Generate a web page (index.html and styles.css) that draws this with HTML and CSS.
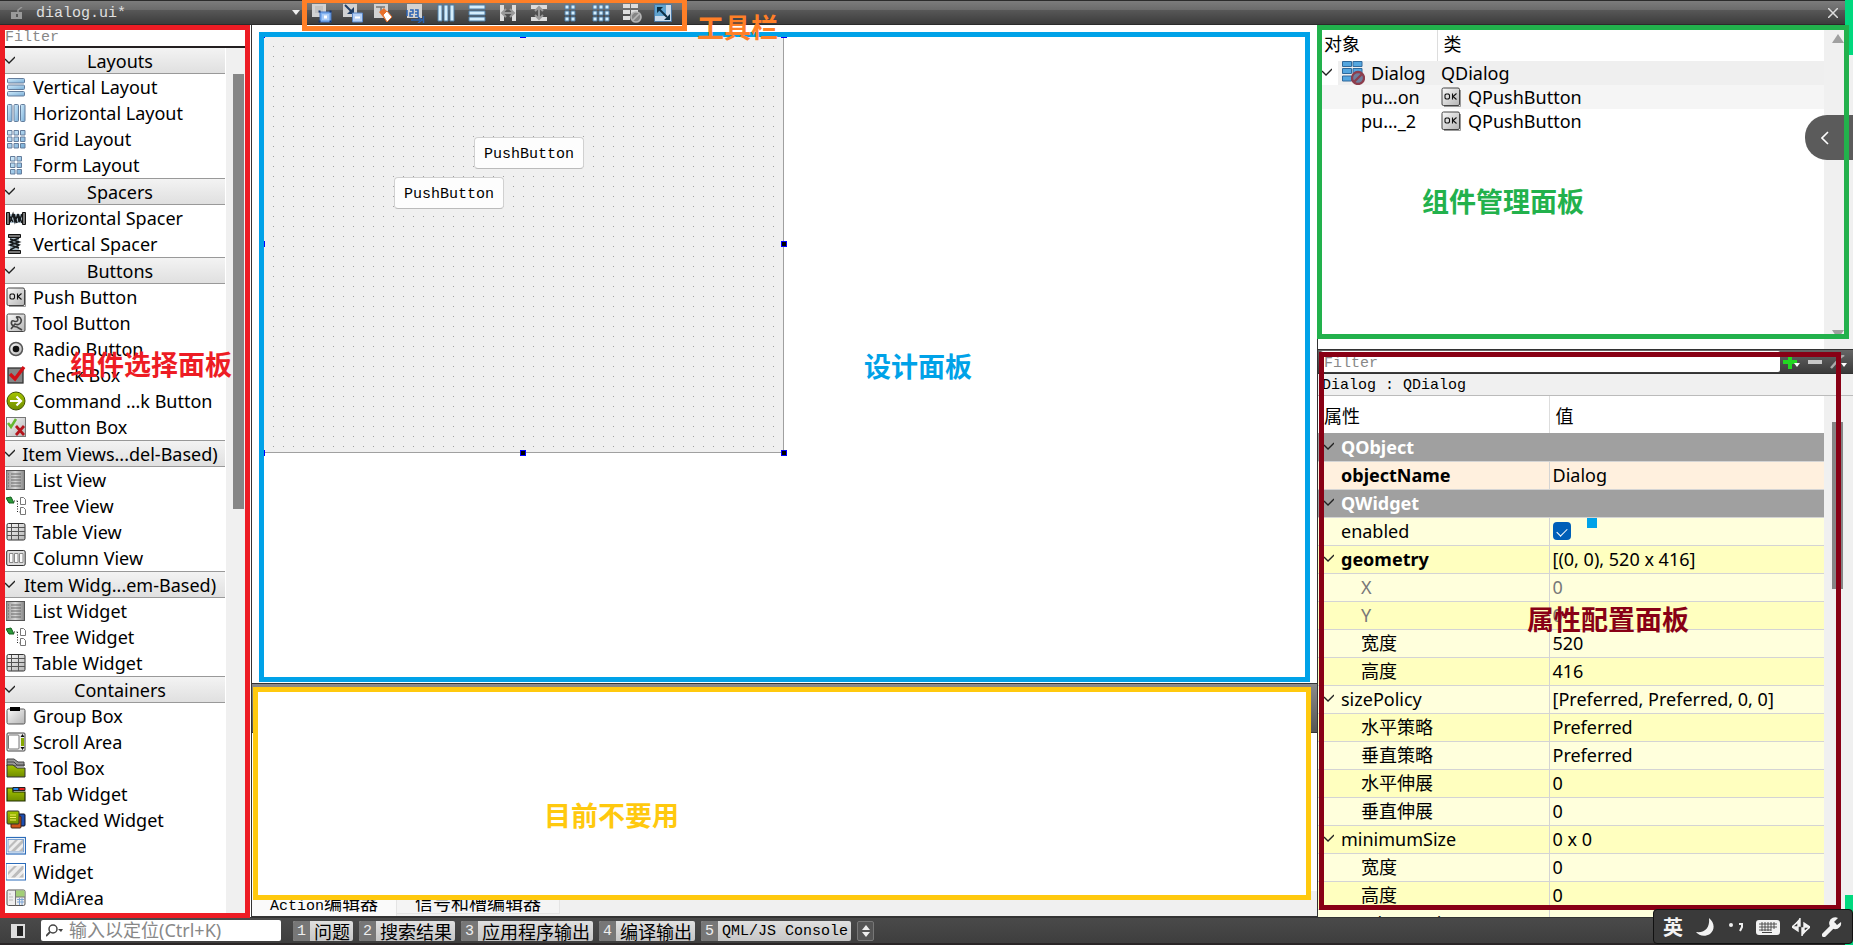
FILE: index.html
```html
<!DOCTYPE html>
<html lang="zh-CN">
<head>
<meta charset="utf-8">
<title>dialog.ui</title>
<link rel="stylesheet" href="styles.css">
</head>
<body>
<svg class="defs" aria-hidden="true">
  <defs>
    <linearGradient id="blue" x1="0" y1="0" x2="1" y2="1"><stop offset="0" stop-color="#d3ecfb"/><stop offset="1" stop-color="#78aed8"/></linearGradient>
    <linearGradient id="grey" x1="0" y1="0" x2="1" y2="1"><stop offset="0" stop-color="#fafafa"/><stop offset="1" stop-color="#b4b4b4"/></linearGradient>
    <linearGradient id="green" x1="0" y1="0" x2="0" y2="1"><stop offset="0" stop-color="#a5c500"/><stop offset="1" stop-color="#6f8c00"/></linearGradient>
    <linearGradient id="steel" x1="0" y1="0" x2="1" y2="0"><stop offset="0" stop-color="#909090"/><stop offset=".5" stop-color="#d8d8d8"/><stop offset="1" stop-color="#858585"/></linearGradient>
    <symbol id="chev" viewBox="0 0 10 10"><path d="M0 3l4 4 6-6" fill="none" stroke="#222" stroke-width="1.3"/></symbol>
    <symbol id="vlay" viewBox="0 0 20 20"><g fill="url(#blue)" stroke="#647d9c"><rect x="1.500" y="1.500" width="17" height="4.500" rx="1"/><rect x="1.500" y="8" width="17" height="4.500" rx="1"/><rect x="1.500" y="14.500" width="17" height="4.500" rx="1"/></g></symbol>
    <symbol id="hlay" viewBox="0 0 20 20"><g fill="url(#blue)" stroke="#647d9c"><rect x="1.500" y="1.500" width="4.500" height="17" rx="1"/><rect x="8" y="1.500" width="4.500" height="17" rx="1"/><rect x="14.500" y="1.500" width="4.500" height="17" rx="1"/></g></symbol>
    <symbol id="glay" viewBox="0 0 20 20"><g fill="url(#blue)" stroke="#647d9c"><path d="M1.500 1.500H6V6H1.500zM8 1.500h4.500V6H8zM14.500 1.500H19V6h-4.500zM1.500 8H6v4.500H1.500zM8 8h4.500v4.500H8zM14.500 8H19v4.500h-4.500zM1.500 14.500H6V19H1.500zM8 14.500h4.500V19H8zM14.500 14.500H19V19h-4.500z"/></g></symbol>
    <symbol id="flay" viewBox="0 0 20 20"><g fill="url(#blue)" stroke="#647d9c"><path d="M4.500 1.500H9V6H4.500zM11 1.500h4.500V6H11zM4.500 8H9v4.500H4.500zM11 8h4.500v4.500H11zM4.500 14.500H9V19H4.500zM11 14.500h4.500V19H11z"/></g></symbol>
    <symbol id="hsp" viewBox="0 0 20 20"><path d="M3 6h14v9H3z" fill="#a9bcc8"/><path d="M4 14l3-8 2 8 3-8 1 8 3-8M3 7l4 7M8 6l3 9M12 6l4 9" fill="none" stroke="#15191c" stroke-width="1.500"/><path d="M.5 4.500h3v12h-3zM16.500 4.500h3v12h-3z" fill="#777" stroke="#111"/></symbol>
    <symbol id="vsp" viewBox="0 0 20 20"><path d="M4 3h9v14H4z" fill="#a9bcc8"/><path d="M4 5l9 3-9 3 9 3M13 4l-9 4 9 3-9 5" fill="none" stroke="#15191c" stroke-width="1.600"/><path d="M2.500.5h12v3h-12zM2.500 16.500h12v3h-12z" fill="#777" stroke="#111"/></symbol>
    <symbol id="ok" viewBox="0 0 20 20"><path d="M3 19.500h16.500V3" fill="none" stroke="#999"/><rect x="1" y="1" width="17.500" height="17.500" rx="1.500" fill="url(#grey)" stroke="#444"/><path d="M5 7h2.500l1 1v3l-1 1H5l-1-1V8zM11.500 6.500v6M15.500 6.500l-3.500 3 3.500 3" fill="none" stroke="#111" stroke-width="1.100"/></symbol>
    <symbol id="tool" viewBox="0 0 20 20"><rect x="1" y="1" width="18" height="17.500" rx="1.500" fill="url(#grey)" stroke="#444"/><path d="M10 4c4-1 6 2 5 5-1 3-4 3-6 2l-4 5M10 4c3 2 2 4 0 4.500C8 9 8 7 6 8c-2 3 1 6 5 6l5 3" fill="none" stroke="#444" stroke-width="1.600"/></symbol>
    <symbol id="radio" viewBox="0 0 20 20"><circle cx="10" cy="10" r="6.500" fill="url(#grey)" stroke="#555" stroke-width="1.500"/><circle cx="10" cy="10" r="3.300" fill="#111"/></symbol>
    <symbol id="check" viewBox="0 0 20 20"><rect x="2" y="3" width="15" height="15" fill="#858585" stroke="#333" stroke-width="1.300"/><path d="M4 9l5 5 9-12" fill="none" stroke="#d21017" stroke-width="3.400"/></symbol>
    <symbol id="cmd" viewBox="0 0 20 20"><circle cx="10" cy="10" r="9" fill="url(#green)" stroke="#435400"/><path d="M4 10h11M10.500 5.500L15 10l-4.500 4.500" fill="none" stroke="#fff" stroke-width="2.200"/></symbol>
    <symbol id="bbox" viewBox="0 0 20 20"><rect x=".5" y=".5" width="19" height="19" fill="url(#grey)" stroke="#777"/><path d="M2 6l3 4 5-8" fill="none" stroke="#65b82e" stroke-width="2.500"/><path d="M10 9l8 9M18 9l-8 9" stroke="#b5141c" stroke-width="2.700"/></symbol>
    <symbol id="list" viewBox="0 0 20 20"><rect x="0" y=".5" width="18.500" height="19" fill="url(#steel)" stroke="#555"/><path d="M5 4h10M5 7h10M5 10h10M5 13h10M5 16h10M2 4h1M2 7h1M2 10h1M2 13h1M2 16h1" stroke="#666"/></symbol>
    <symbol id="tree" viewBox="0 0 20 20"><path d="M0 2l5-1 3 6-5 0z" fill="#2c9a3a" stroke="#125c1d"/><path d="M8 5h4M11.500 5v11h2" fill="none" stroke="#222" stroke-dasharray="1 1.500"/><path d="M14.500 1.500h3l2 2v5h-5zM14.500 11.500h3l2 2v5h-5z" fill="#fff" stroke="#777"/></symbol>
    <symbol id="table" viewBox="0 0 20 20"><rect x="1" y="1.500" width="18" height="16.500" rx="1.500" fill="url(#grey)" stroke="#333"/><path d="M1 5.500h18M1 9.500h18M1 13.500h18M5.500 2v16M12.500 2v16" stroke="#555"/></symbol>
    <symbol id="column" viewBox="0 0 20 20"><rect x=".7" y="2.500" width="18.500" height="15" rx="1.500" fill="#ddd" stroke="#333"/><path d="M3.500 5.500h3.500v9H3.500zM8.500 5.500H12v9H8.500zM13.500 5.500H17v9h-3.500z" fill="#fafafa" stroke="#888"/></symbol>
    <symbol id="group" viewBox="0 0 20 20"><rect x="1" y="3" width="18" height="15" rx="1.500" fill="url(#grey)" stroke="#555"/><path d="M4 1h10v4H4z" fill="#000"/></symbol>
    <symbol id="scroll" viewBox="0 0 20 20"><rect x="1" y="1" width="18" height="18" rx="1" fill="#eee" stroke="#444"/><rect x="2.500" y="3" width="10.500" height="14" rx="1" fill="#fff" stroke="#777"/><path d="M15 6h3v8h-3z" fill="#86a800"/><path d="M14.500 5l2-3 2 3zM14.500 15l2 3 2-3z" fill="#111"/></symbol>
    <symbol id="tbox" viewBox="0 0 20 20"><path d="M1 1h7l4 3h6v4H1z" fill="#999" stroke="#444"/><path d="M1 4l7 0 3 3h8" fill="none" stroke="#444"/><path d="M1 7h6l4 3h8v9H1z" fill="url(#green)" stroke="#333"/></symbol>
    <symbol id="tab" viewBox="0 0 20 20"><path d="M1 4h6v4h12v9H1z" fill="url(#green)" stroke="#223000" stroke-width="1.200"/><path d="M7 3.500h6v3H7z" fill="#2587e8" stroke="#222"/><path d="M13 3.500h6v3h-6z" fill="#ea2020" stroke="#222"/></symbol>
    <symbol id="stack" viewBox="0 0 20 20"><rect x="9" y="4" width="10" height="12" rx="1" fill="#1d4eb0" stroke="#112"/><rect x="5" y="6" width="10" height="12" rx="1" fill="#d0561a" stroke="#421"/><rect x="1" y="1" width="12" height="13" rx="1" fill="url(#green)" stroke="#333"/><path d="M4 5h6M4 7.500h6M4 10h6" stroke="#f4f060" stroke-width="1.200"/></symbol>
    <symbol id="frame" viewBox="0 0 20 20"><rect x="0" y="1.500" width="19.500" height="16.500" fill="#fff" stroke="#2c6cb9" stroke-width="1.200"/><rect x="2" y="3.500" width="15.500" height="12.500" fill="#ededed" stroke="#4e83c4" stroke-width=".7"/><path d="M3 10l6-6h3L3 13zM5 15L16 4h1v3l-8 8zM13 15l4-4v4z" fill="#bcbcbc"/></symbol>
    <symbol id="widget" viewBox="0 0 20 20"><rect x="0" y="1.500" width="19.500" height="16.500" fill="#fff" stroke="#2c6cb9"/><path d="M2 3.500h15.500V16H2z" fill="#ededed"/><path d="M2 10l6-6h3l-9 9zM5 15.500L16 4h1.500v3L9 15.500zM13 15.500l4.500-4.500v4.500z" fill="#bcbcbc"/></symbol>
    <symbol id="mdi" viewBox="0 0 20 20"><rect x="1" y="2" width="18" height="15.500" rx="1.500" fill="#eee" stroke="#555"/><path d="M9 2.500h9.500V9H9z" fill="#a2cf76"/><path d="M9.500 2v15.500M9.500 9H19" stroke="#777"/><path d="M3 6h2M3 9h4M3 12h4" stroke="#bbb"/><path d="M11 11.500h7M11 14h7M13.500 10v7M16 10v7" stroke="#7da4d4"/></symbol>
    <symbol id="form" viewBox="0 0 24 24"><g fill="#54a6df" stroke="#30699b"><path d="M1.500.5h9v5h-9zM12 .5h9v5h-9zM1.500 7.500h9v5h-9zM12 7.500h9v5h-9zM1.500 15h9v5h-9z"/></g><circle cx="17" cy="17" r="6" fill="#6f7f9d" stroke="#8d3d4c" stroke-width="2.300"/><path d="M13 21l8-8" stroke="#8d3d4c" stroke-width="2.300"/></symbol>
  </defs>
</svg>

<div class="app">
  <header class="topbar">
    <div class="doc">
      <svg class="lock" width="12" height="13" viewBox="0 0 12 13"><path d="M0 5h11v7H0z" fill="#999"/><path d="M7 5V3l4-3" fill="none" stroke="#999" stroke-width="1.500"/><path d="M5 7h2v3H5z" fill="#555"/></svg>
      <select class="doc-select" aria-label="文件"><option>dialog.ui*</option></select>
      <svg class="drop" width="8" height="6" viewBox="0 0 8 6"><path d="M0 0h8L4 5z" fill="#eee"/></svg>
    </div>
    <nav class="tools">
      <button class="tool" aria-label="编辑控件"><svg viewBox="0 0 20 20"><path d="M0 1h14v13H0z" fill="#d2d2d2"/><path d="M3 3h8v7H3z" fill="#c2c2c2"/><path d="M8 9h11v10H8z" fill="#7fb0f0" stroke="#4577c4"/><path d="M10 11h7v6h-7z" fill="#a9cbf7"/><path d="M12 12.500h3v3h-3z" fill="#fff"/><path d="M6.500 7.500h2v2h-2zM17.500 7.500h2v2h-2zM6.500 17.500h2v2h-2zM17.500 17.500h2v2h-2z" fill="#16366f"/></svg></button>
      <button class="tool" aria-label="编辑信号/槽"><svg viewBox="0 0 20 20"><path d="M0 1h14v13H0z" fill="#d2d2d2"/><path d="M2 2l7 7" stroke="#213d63" stroke-width="2"/><path d="M11 4v7H4z" fill="#213d63"/><path d="M9.500 10h10v9h-10z" fill="#b5d0f6" stroke="#5b87c7"/><path d="M12 14.500h5" stroke="#fff" stroke-width="2"/></svg></button>
      <button class="tool" aria-label="编辑伙伴"><svg viewBox="0 0 20 20"><path d="M0 1h14v14H0z" fill="#d2d2d2"/><path d="M2 4h9M7 4v6" stroke="#777" stroke-width="1.500"/><path d="M5 9l5-4 8 9-5 5z" fill="#e8702a"/><path d="M9 12l4-4 5 6-5 5z" fill="#fff" stroke="#e8702a"/></svg></button>
      <button class="tool" aria-label="编辑Tab顺序"><svg viewBox="0 0 20 20"><path d="M2 1h15v14H2z" fill="#d2d2d2"/><path d="M2 7v6M5 7h3v3H5v3h3M10 7h3v6h-3M10 10h3M6 17h9M13 14l4 3-4 3M18.500 13v7" fill="none" stroke="#2a62b2" stroke-width="1.500"/></svg></button>
      <button class="tool" aria-label="水平布局"><svg viewBox="0 0 20 20"><path d="M2 2h4v16H2zM8 2h4v16H8zM14 2h4v16h-4z" fill="#d5eefc" stroke="#4d7da6"/></svg></button>
      <button class="tool" aria-label="垂直布局"><svg viewBox="0 0 20 20"><path d="M2 2h16v4H2zM2 8h16v4H2zM2 14h16v4H2z" fill="#d5eefc" stroke="#4d7da6"/></svg></button>
      <button class="tool" aria-label="水平分裂器"><svg viewBox="0 0 20 20"><path d="M2 2h4v16H2zM14 2h4v16h-4z" fill="#ddd"/><path d="M4 10h12M8 6l-4 4 4 4M12 6l4 4-4 4" fill="none" stroke="#999" stroke-width="2"/></svg></button>
      <button class="tool" aria-label="垂直分裂器"><svg viewBox="0 0 20 20"><path d="M2 2h16v4H2zM2 14h16v4H2z" fill="#ddd"/><path d="M10 4v12M6 8l4-4 4 4M6 12l4 4 4-4" fill="none" stroke="#999" stroke-width="2"/></svg></button>
      <button class="tool" aria-label="表单布局"><svg viewBox="0 0 20 20"><path d="M5 2h4v4H5zM11 2h4v4h-4zM5 8h4v4H5zM11 8h4v4h-4zM5 14h4v4H5zM11 14h4v4h-4z" fill="#d5eefc" stroke="#4d7da6"/></svg></button>
      <button class="tool" aria-label="栅格布局"><svg viewBox="0 0 20 20"><path d="M2 2h4v4H2zM8 2h4v4H8zM14 2h4v4h-4zM2 8h4v4H2zM8 8h4v4H8zM14 8h4v4h-4zM2 14h4v4H2zM8 14h4v4H8zM14 14h4v4h-4z" fill="#d5eefc" stroke="#4d7da6"/></svg></button>
      <button class="tool" aria-label="打破布局"><svg viewBox="0 0 20 20"><path d="M1 1h7v4H1zM9 1h7v4H9zM1 7h7v4H1zM9 7h7v4H9zM1 13h7v4H1z" fill="#ddd"/><circle cx="14" cy="14" r="5" fill="#858585" stroke="#b5b5b5" stroke-width="1.700"/><path d="M11 17l6-6" stroke="#b5b5b5" stroke-width="1.700"/></svg></button>
      <button class="tool" aria-label="调整大小"><svg viewBox="0 0 20 20"><path d="M1.500 1.500h17v17h-17z" fill="#c9dbec" stroke="#4b77a3"/><path d="M2 2h11v11H2z" fill="#5fa3cf"/><path d="M6 6l8 8" stroke="#0b2f45" stroke-width="2"/><path d="M4 4h6l-6 6zM17 17h-6l6-6z" fill="#0b2f45"/></svg></button>
    </nav>
    <button class="close" aria-label="关闭"><svg width="10" height="10" viewBox="0 0 10 10"><path d="M0 0l10 10M10 0L0 10" stroke="#ddd" stroke-width="1.500"/></svg></button>
    <div class="mark mark-tools"></div>
  </header>

  <main class="main">
    <aside class="widgets">
      <input class="filter" type="text" placeholder="Filter" aria-label="Filter">
      <div class="box">
        <div class="groups">
          <button class="head"><svg><use href="#chev"/></svg><span>Layouts</span></button>
          <ul>
            <li><svg><use href="#vlay"/></svg>Vertical Layout</li>
            <li><svg><use href="#hlay"/></svg>Horizontal Layout</li>
            <li><svg><use href="#glay"/></svg>Grid Layout</li>
            <li><svg><use href="#flay"/></svg>Form Layout</li>
          </ul>
          <button class="head"><svg><use href="#chev"/></svg><span>Spacers</span></button>
          <ul>
            <li><svg><use href="#hsp"/></svg>Horizontal Spacer</li>
            <li><svg><use href="#vsp"/></svg>Vertical Spacer</li>
          </ul>
          <button class="head"><svg><use href="#chev"/></svg><span>Buttons</span></button>
          <ul>
            <li><svg><use href="#ok"/></svg>Push Button</li>
            <li><svg><use href="#tool"/></svg>Tool Button</li>
            <li><svg><use href="#radio"/></svg>Radio Button</li>
            <li><svg><use href="#check"/></svg>Check Box</li>
            <li><svg><use href="#cmd"/></svg>Command ...k Button</li>
            <li><svg><use href="#bbox"/></svg>Button Box</li>
          </ul>
          <button class="head"><svg><use href="#chev"/></svg><span>Item Views...del-Based)</span></button>
          <ul>
            <li><svg><use href="#list"/></svg>List View</li>
            <li><svg><use href="#tree"/></svg>Tree View</li>
            <li><svg><use href="#table"/></svg>Table View</li>
            <li><svg><use href="#column"/></svg>Column View</li>
          </ul>
          <button class="head"><svg><use href="#chev"/></svg><span>Item Widg...em-Based)</span></button>
          <ul>
            <li><svg><use href="#list"/></svg>List Widget</li>
            <li><svg><use href="#tree"/></svg>Tree Widget</li>
            <li><svg><use href="#table"/></svg>Table Widget</li>
          </ul>
          <button class="head"><svg><use href="#chev"/></svg><span>Containers</span></button>
          <ul>
            <li><svg><use href="#group"/></svg>Group Box</li>
            <li><svg><use href="#scroll"/></svg>Scroll Area</li>
            <li><svg><use href="#tbox"/></svg>Tool Box</li>
            <li><svg><use href="#tab"/></svg>Tab Widget</li>
            <li><svg><use href="#stack"/></svg>Stacked Widget</li>
            <li><svg><use href="#frame"/></svg>Frame</li>
            <li><svg><use href="#widget"/></svg>Widget</li>
            <li><svg><use href="#mdi"/></svg>MdiArea</li>
          </ul>
        </div>
        <div class="track"><div class="thumb thumb-widgets"></div></div>
      </div>
      <div class="mark mark-widgets"></div>
      <div class="note note-widgets">组件选择面板</div>
    </aside>

    <section class="center">
      <div class="canvas">
        <div class="dialog">
          <button class="push push-1">PushButton</button>
          <button class="push push-2">PushButton</button>
          <i class="grip n"></i><i class="grip ne"></i><i class="grip e"></i><i class="grip se"></i><i class="grip s"></i><i class="grip sw"></i><i class="grip w"></i><i class="grip nw"></i>
        </div>
        <div class="mark mark-canvas"></div>
        <div class="note note-tools">工具栏</div>
        <div class="note note-canvas">设计面板</div>
      </div>
      <div class="actions">
        <div class="actions-bar"></div>
        <div class="actions-body"></div>
        <div class="tabs"><button class="tabbtn active"><span class="latin">Action</span>编辑器</button><button class="tabbtn">信号和槽编辑器</button></div>
        <div class="mark mark-actions"></div>
        <div class="note note-actions">目前不要用</div>
      </div>
    </section>

    <aside class="right">
      <section class="objects">
        <div class="scrollable">
          <table class="tree">
            <thead><tr><th class="c1">对象</th><th>类</th></tr></thead>
            <tbody>
              <tr class="root"><td><span class="cell"><svg class="chev"><use href="#chev"/></svg><svg class="formicon"><use href="#form"/></svg>Dialog</span></td><td>QDialog</td></tr>
              <tr class="alt"><td class="child">pu...on</td><td><span class="cell"><svg class="okicon"><use href="#ok"/></svg>QPushButton</span></td></tr>
              <tr><td class="child">pu..._2</td><td><span class="cell"><svg class="okicon"><use href="#ok"/></svg>QPushButton</span></td></tr>
            </tbody>
          </table>
        </div>
        <div class="track wide"><svg class="up" width="12" height="10" viewBox="0 0 12 10"><path d="M6 0l6 9H0z" fill="#a0a0a0"/></svg><svg class="down" width="12" height="10" viewBox="0 0 12 10"><path d="M6 9l6-9H0z" fill="#a0a0a0"/></svg></div>
        <button class="drawer" aria-label="展开"><svg width="8" height="14" viewBox="0 0 8 14"><path d="M7 1L1 7l6 6" fill="none" stroke="#fff" stroke-width="1.600"/></svg></button>
        <div class="mark mark-objects"></div>
        <div class="note note-objects">组件管理面板</div>
      </section>
      <section class="props">
        <div class="props-bar">
          <input class="filter" type="text" placeholder="Filter" aria-label="Filter">
          <button class="mini" aria-label="添加"><svg width="18" height="14" viewBox="0 0 18 14"><path d="M5 0h4v5h5v4H9v5H5V9H0V5h5z" fill="#22d822"/><path d="M11 8h6l-3 4z" fill="#fff"/></svg></button>
          <button class="mini" aria-label="删除"><svg width="18" height="14" viewBox="0 0 18 14"><path d="M2 5h14v4H2z" fill="#c8c8c8"/></svg></button>
          <button class="mini" aria-label="配置"><svg width="18" height="14" viewBox="0 0 18 14"><path d="M2 13L12 2l3-2" fill="none" stroke="#aaa" stroke-width="2.500"/><path d="M12 8h6l-3 4z" fill="#fff"/></svg></button>
        </div>
        <div class="caption">Dialog : QDialog</div>
        <div class="props-body">
          <div class="scrollable">
            <table class="grid">
              <thead><tr><th class="name">属性</th><th>值</th></tr></thead>
              <tbody>
                <tr class="sect"><td colspan="2"><span class="cell"><svg class="chev"><use href="#chev"/></svg>QObject</span></td></tr>
                <tr class="peach"><td class="top bold">objectName</td><td>Dialog</td></tr>
                <tr class="sect"><td colspan="2"><span class="cell"><svg class="chev"><use href="#chev"/></svg>QWidget</span></td></tr>
                <tr class="light"><td class="top"><label for="enabled">enabled</label></td><td><span class="cell"><input id="enabled" class="tick" type="checkbox" checked><i class="dot"></i></span></td></tr>
                <tr class="dark"><td><span class="cell bold"><svg class="chev"><use href="#chev"/></svg>geometry</span></td><td>[(0, 0), 520 x 416]</td></tr>
                <tr class="light off"><td class="sub">X</td><td>0</td></tr>
                <tr class="dark off"><td class="sub">Y</td><td>0</td></tr>
                <tr class="light"><td class="sub">宽度</td><td>520</td></tr>
                <tr class="dark"><td class="sub">高度</td><td>416</td></tr>
                <tr class="light"><td><span class="cell"><svg class="chev"><use href="#chev"/></svg>sizePolicy</span></td><td>[Preferred, Preferred, 0, 0]</td></tr>
                <tr class="dark"><td class="sub">水平策略</td><td>Preferred</td></tr>
                <tr class="light"><td class="sub">垂直策略</td><td>Preferred</td></tr>
                <tr class="dark"><td class="sub">水平伸展</td><td>0</td></tr>
                <tr class="light"><td class="sub">垂直伸展</td><td>0</td></tr>
                <tr class="dark"><td><span class="cell"><svg class="chev"><use href="#chev"/></svg>minimumSize</span></td><td>0 x 0</td></tr>
                <tr class="light"><td class="sub">宽度</td><td>0</td></tr>
                <tr class="dark"><td class="sub">高度</td><td>0</td></tr>
                <tr class="light"><td><span class="cell"><svg class="chev"><use href="#chev"/></svg>maximumSize</span></td><td>16777215</td></tr>
              </tbody>
            </table>
          </div>
          <div class="track wide"><div class="thumb thumb-props"></div></div>
        </div>
        <div class="mark mark-props"></div>
        <div class="note note-props">属性配置面板</div>
      </section>
    </aside>
  </main>

  <footer class="status">
    <button class="side" aria-label="边栏"><svg width="14" height="14" viewBox="0 0 14 14"><path d="M0 0h14v14H0z" fill="#ddd"/><path d="M6 2h6v10H6z" fill="#222"/></svg></button>
    <div class="locate">
      <svg width="18" height="14" viewBox="0 0 18 14"><circle cx="7" cy="5" r="4" fill="none" stroke="#444" stroke-width="1.500"/><path d="M4 8l-4 4" stroke="#444" stroke-width="1.800"/><path d="M12 5h5l-2 3z" fill="#444"/></svg>
      <input type="text" placeholder="输入以定位(Ctrl+K)" aria-label="输入以定位">
    </div>
    <div class="panes">
      <button class="pane"><b>1</b><span>问题</span></button>
      <button class="pane"><b>2</b><span>搜索结果</span></button>
      <button class="pane"><b>3</b><span>应用程序输出</span></button>
      <button class="pane"><b>4</b><span>编译输出</span></button>
      <button class="pane"><b>5</b><span class="latin">QML/JS Console</span></button>
      <button class="updown" aria-label="更多"><svg width="8" height="12" viewBox="0 0 8 12"><path d="M4 0l4 5H0zM4 12l4-5H0z" fill="#eee"/></svg></button>
    </div>
  </footer>

  <div class="strip strip-top"></div>
  <div class="strip strip-bottom"></div>
  <div class="ime">
    <span class="lang">英</span>
    <svg width="20" height="20" viewBox="0 0 20 20"><path d="M14 1c6 5 6 12 1 16-5 3-11 2-14-2 9 1 14-4 13-14z" fill="#f2f2f2"/></svg>
    <svg width="18" height="20" viewBox="0 0 18 20"><circle cx="4" cy="8" r="2" fill="#eee"/><path d="M12 7h3v3l-2 4" fill="none" stroke="#eee" stroke-width="2"/></svg>
    <svg width="24" height="20" viewBox="0 0 24 20"><rect x="0" y="3" width="24" height="15" rx="3" fill="#f2f2f2"/><path d="M3 7h18M3 10h18M3 13h12M6 5v9M9 5v9M12 5v9M15 5v9M18 5v7" stroke="#444" stroke-width=".9"/><path d="M6 15.500h10" stroke="#444"/></svg>
    <svg width="18" height="20" viewBox="0 0 18 20"><path d="M0 10l6-5v4h2V1M18 10l-6 5v-4h-2v8M0 10h6v4zM18 10h-6V6z" fill="#f2f2f2" stroke="#f2f2f2" stroke-width="1.400"/></svg>
    <svg width="20" height="20" viewBox="0 0 20 20"><path d="M2 18l10-10" stroke="#f2f2f2" stroke-width="4.500" stroke-linecap="round"/><path d="M16 1a6 6 0 1 0 3 4l-4 3-3-3z" fill="#f2f2f2"/></svg>
  </div>
</div>
</body>
</html>
```
FILE: styles.css
```css
* { box-sizing: border-box; }
html, body { height: 100%; margin: 0; }
body {
  font-family: "Noto Sans", "Noto Sans CJK SC", sans-serif;
  font-size: 18px;
  color: #000;
  background: #fff;
  overflow: hidden;
}
button, input, select { font: inherit; margin: 0; padding: 0; border: 0; color: inherit; background: none; outline: 0; }
svg { flex: none; }
ul { list-style: none; margin: 0; padding: 0; }
table { border-collapse: collapse; border-spacing: 0; width: 100%; table-layout: fixed; }
.defs { position: absolute; width: 0; height: 0; }
.app { position: relative; display: flex; flex-direction: column; height: 100vh; overflow: hidden; }
.latin { font: 15px/22px "Liberation Mono", monospace; }

/* annotations over the panels */
.mark { position: absolute; border: 5px solid; pointer-events: none; z-index: 2; }
.note { position: absolute; font: bold 27px/32px "Noto Sans CJK SC", sans-serif; white-space: nowrap; z-index: 3; }

/* top bar */
.topbar {
  position: relative; z-index: 1; flex: none; height: 25px; display: flex; align-items: center;
  background: linear-gradient(#7c7c7c, #6a6a6a 40%, #575757 41%, #3c3c3c);
  border-top: 1px solid #2b2b2b; border-bottom: 1px solid #2b2b2b;
}
.doc { width: 306px; display: flex; align-items: center; padding: 0 6px 0 11px; }
.doc-select { flex: 1; appearance: none; padding: 2px 0 0 13px; color: #e0e0e0; font: 15px/20px "Liberation Mono", monospace; }
.lock { margin-top: 2px; }
.tools { display: flex; }
.tool { width: 31px; height: 23px; display: flex; justify-content: center; align-items: center; }
.tool svg { width: 20px; height: 20px; }
.close { margin: 0 4px 0 auto; width: 32px; height: 22px; display: flex; align-items: center; justify-content: center; }
.mark-tools { left: 302px; width: 385px; top: -3px; height: 33px; border-color: #ff7f27; }

.main { flex: 1; min-height: 0; display: grid; grid-template-columns: 252px minmax(0, 1fr) 536px; }

/* widget box */
.widgets { position: relative; display: flex; flex-direction: column; min-height: 0; border-right: 1px solid #333; padding-right: 6px; }
.filter { font: 15px/20px "Liberation Mono", monospace; background: #fff; }
.filter::placeholder { color: #888; opacity: 1; }
.widgets .filter { flex: none; height: 23px; padding: 3px 0 0 5px; border-bottom: 2px solid #231f20; }
.box { flex: 1; min-height: 0; display: flex; }
.groups { flex: 1; overflow: hidden; border-right: 1px solid #fff; }
.head {
  display: flex; align-items: center; width: 100%; height: 27px; padding-left: 5px;
  background: linear-gradient(#f3f3f3, #e0e0e0); border-top: 1px solid #999; border-bottom: 1px solid #999;
}
.head:first-child { height: 26px; border-top: 0; }
.head svg { width: 10px; height: 10px; }
.head span { flex: 1; text-align: center; line-height: 24px; white-space: nowrap; }
.groups li { display: flex; align-items: center; height: 26px; padding-left: 6px; gap: 7px; line-height: 26px; white-space: nowrap; }
.groups li svg { width: 20px; height: 20px; }
.track { position: relative; width: 19px; background: #f0f0f0; flex: none; }
.track.wide { width: 29px; }
.thumb { position: absolute; width: 11px; left: 7px; background: #868686; }
.thumb-widgets { top: 3%; height: 50%; }
.mark-widgets { inset: 0 1px -1px 0; border-color: #ed1c24; }
.note-widgets { left: 70px; top: 323px; color: #ed1c24; }

/* form editor */
.center { display: flex; flex-direction: column; min-width: 0; min-height: 0; }
.canvas { position: relative; flex: 1; min-height: 0; padding: 10px; background: #fff; }
.dialog {
  position: relative; width: 522px; height: 418px; background: #f0f0f0;
  background-image: conic-gradient(from 270deg at 1px 1px, #a0a0a0 90deg, transparent 0);
  background-size: 10px 10px; background-position: 1px 1px;
  border-right: 1px solid #a0a0a0; border-bottom: 1px solid #a0a0a0;
}
.push { position: absolute; width: 110px; height: 32px; padding-top: 3px; background: #fdfdfd; border: 1px solid #d0d0d0; border-bottom-color: #bbb; border-radius: 4px; font: 15px/20px "Liberation Mono", monospace; }
.push-1 { left: 212px; top: 102px; }
.push-2 { left: 132px; top: 142px; }
.grip { position: absolute; width: 6px; height: 6px; background: #000; border: 1px solid #00f; }
.n, .s { left: 258px; } .ne, .e, .se { right: -4px; } .nw, .w, .sw { left: -3px; }
.n, .ne, .nw { top: -3px; } .e, .w { top: 206px; } .s, .se, .sw { bottom: -4px; }
.mark-canvas { inset: 7px 7px 1px 7px; border-color: #00a2e8; }
.note-tools { left: 445px; top: -14px; color: #ff7f27; }
.note-canvas { left: 612px; top: 325px; color: #00a2e8; }

.actions { position: relative; flex: none; height: 234px; display: flex; flex-direction: column; border-top: 1px solid #333; }
.actions-bar { height: 49px; background: linear-gradient(#8a8a8a, #555); border-bottom: 1px solid #333; }
.actions-body { flex: 1; background: #fff; }
.tabs { display: flex; align-items: flex-start; height: 26px; background: #f0f0f0; border-bottom: 1px solid #333; }
.tabbtn { height: 23px; padding: 0 18px; font: 18px/23px "Noto Sans CJK SC", sans-serif; background: #f4f4f4; border-right: 1px solid #e4e4e4; border-bottom: 1px solid #e4e4e4; }
.tabbtn.active { height: 25px; background: #fafafa; border-bottom: 0; }
.mark-actions { inset: 3px 6px 17px 1px; border-color: #ffc90e; background: #fff; }
.note-actions { left: 292px; top: 115px; color: #ffc90e; }

/* right column */
.right { display: flex; flex-direction: column; min-height: 0; border-left: 1px solid #333; }
.scrollable { flex: 1; min-width: 0; overflow: hidden; }
th { text-align: left; font-weight: normal; }
td, th { padding: 0; white-space: nowrap; overflow: hidden; }
.cell { display: flex; align-items: center; }
.chev { width: 10px; height: 10px; }
.objects { position: relative; display: flex; height: 325px; flex: none; border-bottom: 1px solid #333; }
.tree th { height: 36px; padding: 0 0 0 6px; }
.tree .c1 { width: 119px; border-right: 1px solid #ddd; }
.tree td { height: 24px; line-height: 24px; padding-left: 4px; }
.tree .root { background: linear-gradient(90deg, #fff 20px, #efefef 20px); }
.tree .alt { background: #f5f5f5; }
.formicon { width: 24px; height: 24px; margin: 0 6px 0 9px; }
.tree .child { padding-left: 43px; }
.okicon { width: 20px; height: 20px; margin-right: 7px; }
.up { position: absolute; left: 8px; top: 9px; }
.down { position: absolute; left: 8px; bottom: 9px; }
.drawer { position: absolute; right: 0; top: 90px; width: 48px; height: 45px; padding-left: 16px; background: #5b5b5b; border-radius: 22px 0 0 22px; display: flex; align-items: center; }
.mark-objects { inset: 0 4px 10px -1px; border-color: #22b14c; }
.note-objects { left: 104px; top: 160px; color: #22b14c; }

.props { position: relative; flex: 1; min-height: 0; display: flex; flex-direction: column; }
.props-bar { flex: none; height: 24px; display: flex; align-items: center; padding: 0 4px 0 3px; background: linear-gradient(#666, #3a3a3a); border-bottom: 1px solid #333; }
.props-bar .filter { flex: 1; min-width: 0; height: 21px; padding: 3px 0 0 3px; border-radius: 2px; }
.mini { width: 23px; height: 20px; display: flex; align-items: center; justify-content: center; }
.caption { flex: none; height: 22px; padding: 1px 0 0 4px; font: 15px/21px "Liberation Mono", monospace; background: #f0f0f0; border-bottom: 1px solid #bbb; }
.props-body { flex: 1; min-height: 0; display: flex; }
.grid th { height: 37px; padding-left: 6px; }
.grid .name { width: 231px; border-right: 1px solid #ddd; }
.grid td { height: 28px; line-height: 26px; padding-left: 3px; border-bottom: 1px solid #d4d4d4; }
.grid td:first-child { padding-left: 6px; border-right: 1px solid #d4d4d4; }
.grid .chev { margin-right: 7px; }
.grid .sect td { background: #a0a0a0; color: #fff; font-weight: bold; border-right: 0; }
.bold { font-weight: bold; }
.peach { background: #fff0de; }
.light { background: #ffffdc; }
.dark { background: #ffffbf; }
.off { color: #787878; }
.grid td.top:first-child { padding-left: 23px; }
.grid td.sub:first-child { padding-left: 43px; }
.tick { appearance: none; width: 18px; height: 18px; border-radius: 4px; background: #005fb8; display: grid; place-content: center; }
.tick::after { content: ""; width: 9px; height: 5px; border-left: 1px solid #fff; border-bottom: 1px solid #fff; transform: rotate(-45deg); }
.dot { width: 10px; height: 10px; margin: 0 0 16px 16px; background: #00a2e8; }
.thumb-props { left: 8px; top: 5%; height: 32%; }
.mark-props { inset: 2px 12px 7px 1px; border-color: #880015; }
.note-props { left: 209px; top: 253px; color: #880015; }

/* status bar */
.status { flex: none; height: 28px; display: flex; align-items: center; background: linear-gradient(#4a4a4a, #3e3e3e); border-top: 1px solid #333; border-bottom: 2px solid #2a2627; }
.side { width: 41px; display: flex; padding-left: 11px; }
.locate { width: 240px; height: 21px; display: flex; align-items: center; gap: 5px; padding-left: 5px; background: #fff; border-radius: 2px; }
.locate input { flex: 1; min-width: 0; height: 21px; line-height: 21px; }
.locate input::placeholder { color: #888; opacity: 1; }
.panes { display: flex; gap: 6px; margin-left: 12px; }
.pane { display: flex; height: 20px; font: 18px/20px "Noto Sans CJK SC", sans-serif; border-radius: 2px; background: linear-gradient(#e0e0e0, #c6c6c6); }
.pane b { width: 17px; font: 15px/22px "Liberation Mono", monospace; height: 20px; color: #eee; background: #777; border-radius: 2px 0 0 2px; }
.pane span { padding: 0 3px 0 4px; white-space: nowrap; }
.updown { width: 17px; height: 20px; display: flex; align-items: center; justify-content: center; background: #555; border: 1px solid #777; border-radius: 2px; }

.strip { position: absolute; right: 0; width: 8px; background: #00d97e; }
.strip-top { top: 0; height: 55px; z-index: 1; }
.strip-bottom { bottom: 0; height: 50px; }
.ime { position: absolute; right: 0; bottom: 1px; width: 200px; height: 35px; padding: 0 10px 0 9px; display: flex; align-items: center; justify-content: space-between; background: #3a3a3a; border: 1px solid #111; border-radius: 4px; z-index: 4; }
.lang { color: #f2f2f2; font: bold 20px/30px "Noto Sans CJK SC", sans-serif; }
```
